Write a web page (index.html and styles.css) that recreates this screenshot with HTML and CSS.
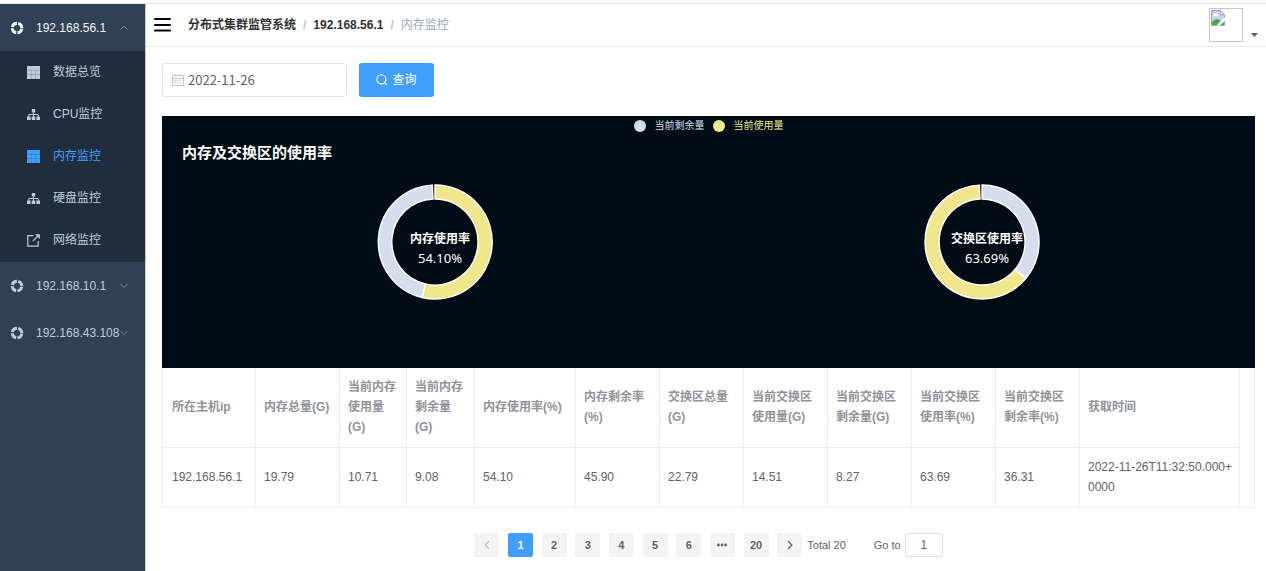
FILE: index.html
```html
<!DOCTYPE html>
<html lang="zh-CN">
<head>
<meta charset="utf-8">
<meta name="viewport" content="width=device-width, initial-scale=1">
<title>分布式集群监管系统</title>
<link rel="stylesheet" href="styles.css">
</head>
<body>
<svg class="defs" aria-hidden="true">
  <symbol id="i-ring" viewBox="0 0 14 14">
    <circle cx="7" cy="7" r="4.8" fill="none" stroke="currentColor" stroke-width="3" stroke-dasharray="6.2 1.34" stroke-dashoffset="-0.67"/>
  </symbol>
  <symbol id="i-grid" viewBox="0 0 13 13">
    <path fill="currentColor" d="M0 0h13v3.8H0zM0 4.4h3.9v3.8H0zM4.6 4.4h3.8v3.8H4.6zM9.1 4.4H13v3.8H9.1zM0 8.9h3.9V13H0zM4.6 8.9h3.8V13H4.6zM9.1 8.9H13V13H9.1z"/>
    <path fill="currentColor" opacity=".7" d="M0 0h13v13H0z"/>
  </symbol>
  <symbol id="i-tree" viewBox="0 0 13 13">
    <path fill="currentColor" d="M4.8 1h3.4v3.6H4.8zM0 8.500h3.600v3.600H0zM4.700 8.500h3.600v3.600H4.700zM9.400 8.500H13v3.600H9.400z"/>
    <path fill="none" stroke="currentColor" d="M6.5 4.5v4.3M1.8 8.8V6.500h9.4v2.3"/>
  </symbol>
  <symbol id="i-link" viewBox="0 0 13 13">
    <path fill="none" stroke="currentColor" stroke-width="1.2" d="M6.5 1.7H.8v10.5h10.4V7M5.8 7.2 11 2"/>
    <path fill="currentColor" d="M8 .2h4.9v4.9z"/>
  </symbol>
  <symbol id="i-down" viewBox="0 0 8 8">
    <path fill="none" stroke="currentColor" stroke-width=".9" d="M.5 2 4 5.5 7.5 2"/>
  </symbol>
  <symbol id="i-up" viewBox="0 0 8 8">
    <path fill="none" stroke="currentColor" stroke-width=".9" d="M.5 5.5 4 2l3.5 3.5"/>
  </symbol>
</svg>
<div class="app">
  <nav class="sidebar" aria-label="主机">
    <button class="host host-open" type="button" aria-expanded="true"><svg class="host-icon"><use href="#i-ring"/></svg><span class="host-name">192.168.56.1</span><svg class="arrow"><use href="#i-up"/></svg></button>
    <ul class="submenu">
      <li><a class="sub-link" href="#overview"><svg class="sub-icon"><use href="#i-grid"/></svg>数据总览</a></li>
      <li><a class="sub-link" href="#cpu"><svg class="sub-icon"><use href="#i-tree"/></svg>CPU监控</a></li>
      <li><a class="sub-link active" href="#memory" aria-current="page"><svg class="sub-icon"><use href="#i-grid"/></svg>内存监控</a></li>
      <li><a class="sub-link" href="#disk"><svg class="sub-icon"><use href="#i-tree"/></svg>硬盘监控</a></li>
      <li><a class="sub-link" href="#network"><svg class="sub-icon"><use href="#i-link"/></svg>网络监控</a></li>
    </ul>
    <button class="host" type="button" aria-expanded="false"><svg class="host-icon"><use href="#i-ring"/></svg><span class="host-name">192.168.10.1</span><svg class="arrow"><use href="#i-down"/></svg></button>
    <button class="host" type="button" aria-expanded="false"><svg class="host-icon"><use href="#i-ring"/></svg><span class="host-name">192.168.43.108</span><svg class="arrow"><use href="#i-down"/></svg></button>
  </nav>

  <div class="content">
    <header class="navbar">
      <button class="hamburger" type="button" aria-label="菜单"><svg width="17" height="14" viewBox="0 0 17 14"><path fill="none" stroke="#000" stroke-width="2" stroke-linecap="round" d="M1 1h15M1 7h15M1 12.500h15"/></svg></button>
      <nav class="breadcrumb" aria-label="路径">
        <a href="#home">分布式集群监管系统</a><span class="slash">/</span><a href="#host">192.168.56.1</a><span class="slash">/</span><span class="here">内存监控</span>
      </nav>
      <button class="user" type="button" aria-label="用户">
        <span class="avatar"><svg width="14" height="16" viewBox="0 0 14 16">
          <path fill="#c3d5f5" stroke="#a2a5ab" d="M.5.5h8.8l4.2 4.2v10.8H.5z"/>
          <path fill="#fff" stroke="#a2a5ab" d="M9.3.5v4.2h4.2z"/>
          <path fill="#fff" d="M2.3 6.2a1.5 1.5 0 0 1 1.2-2 2 2 0 0 1 3.6.3 1.2 1.2 0 0 1 .3 1.7z"/>
          <path fill="#54a53b" d="M1 15v-3q4.500-5.500 8.500-1.300L6 15zM9.800 15 13 12v3z"/>
          <path fill="#fff" d="M14 7.200v3L8 16H5.600z"/>
        </svg></span>
        <svg class="caret" viewBox="0 0 7 4"><path fill="#5a5e66" d="M0 0h7L3.500 4z"/></svg>
      </button>
    </header>

    <main class="main">
      <form class="filters">
        <div class="date-box">
          <svg width="12" height="12" viewBox="0 0 12 12" aria-hidden="true"><path fill="none" stroke="#c0c4cc" d="M.5 1.500h11v10H.500zM.500 4.500h11M3.500 0v2.500M8.500 0v2.500"/><path fill="none" stroke="#c0c4cc" stroke-dasharray="1.500 1" d="M2.500 6.500h7M2.500 8.800h7"/></svg>
          <input class="date-input" type="text" value="2022-11-26" aria-label="日期">
        </div>
        <button class="search" type="button"><svg width="12" height="12" viewBox="0 0 12 12" aria-hidden="true"><path fill="none" stroke="#fff" stroke-width="1.100" d="M10 5.300a4.600 4.600 0 1 1-9.200 0 4.600 4.600 0 0 1 9.200 0zM8.600 8.600l2.300 2.300"/></svg>查询</button>
      </form>

      <section class="chart">
        <div class="legend">
          <span class="legend-item free"><i class="dot"></i>当前剩余量</span>
          <span class="legend-item used"><i class="dot"></i>当前使用量</span>
        </div>
        <h1 class="chart-title">内存及交换区的使用率</h1>
        <div class="donuts">
          <svg class="donut" viewBox="-60 -60 120 120" role="img" aria-label="内存使用率 54.10%">
            <path class="arc-used" d="M0-57A57 57 0 1 1-12.800 55.500L-9.700 41.900A43 43 0 1 0 0-43z"/>
            <path class="arc-free" d="M-12.800 55.500A57 57 0 0 1-2.700-56.900L-2-43A43 43 0 0 0-9.700 41.900z"/>
            <text class="donut-name" x="5" y="1">内存使用率</text>
            <text class="donut-value" x="5" y="21">54.10%</text>
          </svg>
          <svg class="donut" viewBox="-60 -60 120 120" role="img" aria-label="交换区使用率 63.69%">
            <path class="arc-free" d="M0-57A57 57 0 0 1 43.900 36.400L33.100 27.500A43 43 0 0 0 0-43z"/>
            <path class="arc-used" d="M43.900 36.400A57 57 0 1 1-2.700-56.900L-2-43A43 43 0 1 0 33.100 27.500z"/>
            <text class="donut-name" x="5" y="1">交换区使用率</text>
            <text class="donut-value" x="5" y="21">63.69%</text>
          </svg>
        </div>
      </section>

      <div class="table-wrap">
        <table class="table">
          <colgroup><col class="w93"><col class="w84"><col class="w67"><col class="w68"><col class="w101"><col class="w84"><col class="w84"><col class="w84"><col class="w84"><col class="w84"><col class="w84"><col class="w160"></colgroup>
          <thead>
            <tr><th>所在主机ip</th><th>内存总量(G)</th><th>当前内存使用量(G)</th><th>当前内存剩余量(G)</th><th>内存使用率(%)</th><th>内存剩余率(%)</th><th>交换区总量(G)</th><th>当前交换区使用量(G)</th><th>当前交换区剩余量(G)</th><th>当前交换区使用率(%)</th><th>当前交换区剩余率(%)</th><th>获取时间</th></tr>
          </thead>
          <tbody>
            <tr><td>192.168.56.1</td><td>19.79</td><td>10.71</td><td>9.08</td><td>54.10</td><td>45.90</td><td>22.79</td><td>14.51</td><td>8.27</td><td>63.69</td><td>36.31</td><td class="time">2022-11-26T11:32:50.000+<wbr>0000</td></tr>
          </tbody>
        </table>
      </div>

      <nav class="pagination" aria-label="分页">
        <div class="pager">
          <button class="page" type="button" disabled aria-label="上一页"><svg width="6" height="10" viewBox="0 0 6 10"><path fill="none" stroke="#c0c4cc" stroke-width="1.300" d="M5 1 1.200 5 5 9"/></svg></button>
          <button class="page current" type="button" aria-current="page">1</button>
          <button class="page" type="button">2</button>
          <button class="page" type="button">3</button>
          <button class="page" type="button">4</button>
          <button class="page" type="button">5</button>
          <button class="page" type="button">6</button>
          <button class="page" type="button" aria-label="更多"><svg width="10" height="4" viewBox="0 0 10 4"><path fill="#606266" d="M0 2a1.400 1.400 0 1 1 2.800 0A1.400 1.400 0 0 1 0 2zM3.600 2a1.400 1.400 0 1 1 2.800 0 1.400 1.400 0 0 1-2.800 0zM7.200 2A1.400 1.400 0 1 1 10 2a1.400 1.400 0 0 1-2.800 0z"/></svg></button>
          <button class="page" type="button">20</button>
          <button class="page" type="button" aria-label="下一页"><svg width="6" height="10" viewBox="0 0 6 10"><path fill="none" stroke="#606266" stroke-width="1.300" d="M1 1l3.800 4L1 9"/></svg></button>
        </div>
        <span class="total">Total 20</span>
        <label class="jump">Go to <input class="jump-input" type="text" value="1"></label>
      </nav>
    </main>
  </div>
</div>
</body>
</html>
```
FILE: styles.css
```css
* { box-sizing: border-box; }

body {
  margin: 0;
  padding-top: 3px;
  background: #fff;
  color: #606266;
  font: 12px/20px "Liberation Sans", "Noto Sans CJK SC", sans-serif;
}

button, input { font: inherit; color: inherit; }
button { margin: 0; padding: 0; border: 0; background: none; cursor: pointer; }
a { color: inherit; text-decoration: none; }
svg { display: block; flex: none; }
.defs { position: absolute; width: 0; height: 0; }

.app {
  display: flex;
  min-height: calc(100vh - 3px);
  border-top: 1px solid #e4e4e4;
}

/* Sidebar */
.sidebar {
  flex: none;
  width: 146px;
  border-right: 1px solid #c4c9d0;
  background: #304156;
  color: #bfcbd9;
}
.host {
  display: flex;
  align-items: center;
  width: 100%;
  height: 47px;
  padding: 0 17px 0 10px;
  text-align: left;
}
.host-open { color: #f4f4f5; }
.host-icon { width: 14px; height: 14px; margin-right: 12px; }
.host-name { flex: 1; min-width: 0; white-space: nowrap; }
.arrow { width: 8px; height: 8px; color: #8590a0; }
.submenu {
  margin: 0;
  padding: 0 0 1px;
  list-style: none;
  background: #1f2d3d;
}
.sub-link {
  display: flex;
  align-items: center;
  gap: 13px;
  height: 42px;
  padding-left: 27px;
}
.sub-link.active { color: #409eff; }
.sub-icon { width: 13px; height: 13px; }

/* Header */
.content { flex: 1; min-width: 0; }
.navbar {
  display: flex;
  align-items: center;
  height: 43px;
  padding: 0 8px;
  border-bottom: 1px solid #ebecee;
}
.hamburger { margin-right: 17px; }
.breadcrumb {
  display: flex;
  flex: 1;
  color: #303133;
  font-weight: bold;
}
.slash { margin: 0 7px; color: #c0c4cc; }
.here { color: #97a8be; font-weight: normal; }
.user { display: flex; align-items: flex-end; gap: 8px; }
.avatar {
  width: 34px;
  height: 34px;
  padding: 1px;
  border: 1px solid #c8c8c8;
}
.caret { width: 7px; height: 4px; margin-bottom: 5px; }

/* Filters */
.main { padding: 16px 11px 13px 16px; }
.filters { display: flex; gap: 12px; margin-bottom: 19px; }
.date-box {
  display: flex;
  align-items: center;
  gap: 4px;
  width: 185px;
  height: 34px;
  padding: 0 9px;
  border: 1px solid #dcdfe6;
  border-radius: 4px;
}
.date-input {
  width: 100%;
  min-width: 0;
  padding: 0;
  border: 0;
  outline: 0;
  font: 13px/20px "Noto Sans CJK SC", sans-serif;
}
.search {
  display: flex;
  align-items: center;
  justify-content: center;
  gap: 4px;
  width: 75px;
  height: 34px;
  border-radius: 3px;
  background: #409eff;
  color: #fff;
}

/* Chart */
.chart {
  padding: 4px 0 66px;
  background: #000d16;
  color: #fff;
}
.legend {
  display: flex;
  justify-content: center;
  gap: 8px;
  font-size: 10px;
  line-height: 12px;
}
.legend-item { display: flex; align-items: center; gap: 9px; }
.dot { width: 12px; height: 12px; border-radius: 50%; background: currentColor; }
.free { color: #d6deee; }
.used { color: #f0e68c; }
.chart-title {
  margin: 0;
  padding: 11px 20px 19px;
  font-size: 15px;
  line-height: 20px;
}
.donuts {
  display: grid;
  grid-template-columns: 1fr 1fr;
  justify-items: center;
}
.donut { width: 120px; height: 120px; overflow: visible; }
.arc-used, .arc-free { stroke: #fff; stroke-width: 1.4; }
.arc-used { fill: #f0e68c; }
.arc-free { fill: #d6deee; }
.donut-name, .donut-value { fill: #fff; text-anchor: middle; }
.donut-name { font-size: 12px; font-weight: bold; }
.donut-value { font-family: "Noto Sans", sans-serif; font-size: 13px; }

/* Table */
.table-wrap {
  padding-right: 14px;
  border: 1px solid #ebeef5;
  border-top: 0;
}
.table {
  width: 100%;
  table-layout: fixed;
  border-spacing: 0;
}
.table th, .table td {
  padding: 9px 6px 10px 8px;
  border-right: 1px solid #ebeef5;
  text-align: left;
}
.table th { height: 80px; border-bottom: 1px solid #ebeef5; color: #909399; }
.table td.time { padding-right: 2px; }
.table tr > :first-child { padding-left: 9px; }
.w67 { width: 67px; }
.w68 { width: 68px; }
.w84 { width: 84px; }
.w93 { width: 93px; }
.w101 { width: 101px; }
.w160 { width: 160px; }

/* Pagination */
.pagination {
  display: flex;
  align-items: center;
  justify-content: center;
  margin-top: 25px;
  font-size: 11px;
}
.pager {
  display: flex;
  justify-content: space-between;
  width: 328px;
}
.page {
  display: flex;
  align-items: center;
  justify-content: center;
  width: 25px;
  height: 24px;
  border-radius: 2px;
  background: #f4f4f5;
  font-weight: bold;
}
.page.current { background: #409eff; color: #fff; }
.total { margin: 0 28px 0 5px; }
.jump { display: flex; align-items: center; gap: 4px; }
.jump-input {
  width: 38px;
  height: 24px;
  padding: 0;
  border: 1px solid #dcdfe6;
  border-radius: 3px;
  font-size: 12px;
  text-align: center;
}
```
